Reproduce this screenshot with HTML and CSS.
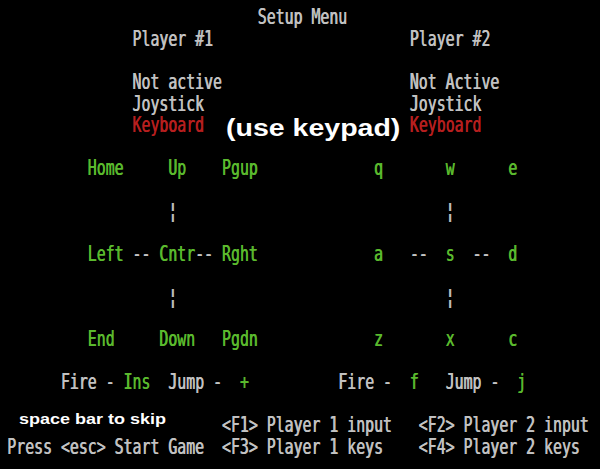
FILE: index.html
```html
<!DOCTYPE html>
<html lang="en">
<head>
    <meta charset="UTF-8">
    <meta name="viewport" content="width=device-width, initial-scale=1.0">
    <title>Setup Menu</title>
    <link rel="stylesheet" href="styles.css">
</head>
<body>
    <div class="screen">
        <div class="row title">                            Setup Menu</div>
        <div class="row">              Player #1                      Player #2</div>
        <div class="row"></div>
        <div class="row">              Not active                     Not Active</div>
        <div class="row">              Joystick                       Joystick</div>
        <div class="row">              <span class="r">Keyboard</span>                       <span class="r">Keyboard</span></div>
        <div class="row"></div>
        <div class="row">         <span class="g">Home</span>     <span class="g">Up</span>    <span class="g">Pgup</span>             <span class="g">q</span>       <span class="g">w</span>      <span class="g">e</span></div>
        <div class="row"></div>
        <div class="row">                  ¦                              ¦</div>
        <div class="row"></div>
        <div class="row">         <span class="g">Left</span> -- <span class="g">Cntr</span>-- <span class="g">Rght</span>             <span class="g">a</span>   --  <span class="g">s</span>  --  <span class="g">d</span></div>
        <div class="row"></div>
        <div class="row">                  ¦                              ¦</div>
        <div class="row"></div>
        <div class="row">         <span class="g">End</span>     <span class="g">Down</span>   <span class="g">Pgdn</span>             <span class="g">z</span>       <span class="g">x</span>      <span class="g">c</span></div>
        <div class="row"></div>
        <div class="row">      Fire - <span class="g">Ins</span>  Jump -  <span class="g">+</span>          Fire -  <span class="g">f</span>   Jump -  <span class="g">j</span></div>
        <div class="row"></div>
        <div class="row">                        &lt;F1&gt; Player 1 input   &lt;F2&gt; Player 2 input</div>
        <div class="row">Press &lt;esc&gt; Start Game  &lt;F3&gt; Player 1 keys    &lt;F4&gt; Player 2 keys</div>

        <!-- captions laid over the video frame -->
        <div class="caption keypad">(use keypad)</div>
        <div class="caption skip">space bar to skip</div>
    </div>
</body>
</html>
```

FILE: styles.css
```css
body {
    margin: 0;
    background-color: #000;
}
.screen {
    position: relative;
    width: 600px;
    height: 469px;
    overflow: hidden;
    box-sizing: border-box;
    padding: 7.4px 0 0 7px;
    background-color: #000;
    color: #c2c2c2;
    font-family: 'DejaVu Sans Mono', 'Liberation Mono', monospace;
    font-size: 14.87px;
}
.row {
    height: 21.45px;
    line-height: 21.6px;
    white-space: pre;
    transform: scaleY(1.4);
    transform-origin: 0 10.8px;
    text-shadow: 0.6px 0 currentColor;
}
.title {
    height: 21.9px;
}
.g {
    color: #5bba2e;
}
.r {
    color: #b71f1f;
}
.caption {
    position: absolute;
    color: #fff;
    font-family: 'Liberation Sans', Arial, sans-serif;
    font-weight: bold;
    white-space: nowrap;
    transform-origin: 0 0;
}
.keypad {
    left: 226px;
    top: 116.5px;
    font-size: 23px;
    line-height: 23px;
    transform: scaleX(1.24);
}
.skip {
    left: 18.5px;
    top: 410.6px;
    font-size: 15px;
    line-height: 15px;
    transform: scaleX(1.2);
}
```
